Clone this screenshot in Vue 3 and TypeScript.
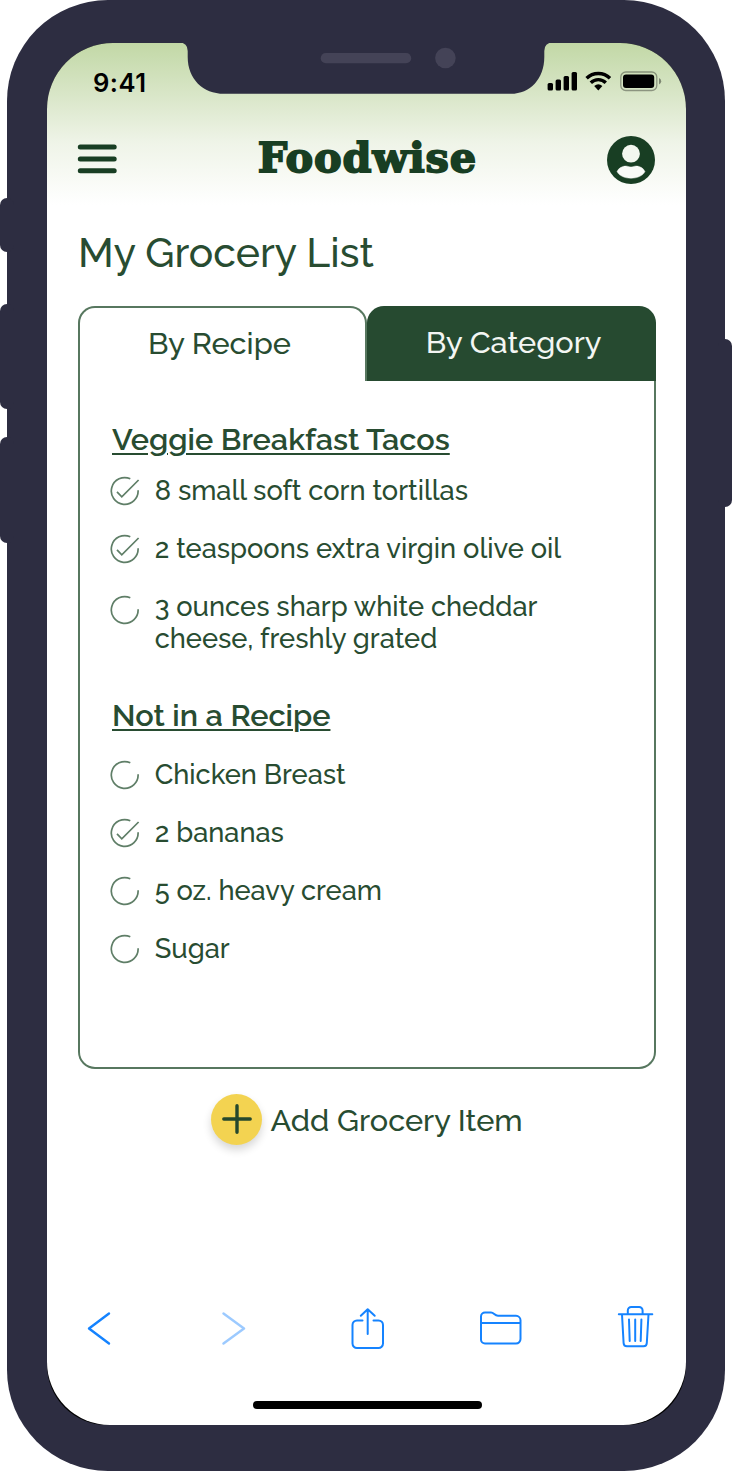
<script setup lang="ts">
import { ref } from 'vue'

interface GroceryItem {
  qty?: string
  lines: string[]
  done: boolean
}
interface GroceryGroup {
  title: string
  kind: string
  items: GroceryItem[]
}

const groups = ref<GroceryGroup[]>([
  {
    title: 'Veggie Breakfast Tacos',
    kind: 'recipe',
    items: [
      { qty: '8', lines: ['small soft corn tortillas'], done: true },
      { qty: '2', lines: ['teaspoons extra virgin olive oil'], done: true },
      { qty: '3', lines: ['ounces sharp white cheddar', 'cheese, freshly grated'], done: false },
    ],
  },
  {
    title: 'Not in a Recipe',
    kind: 'loose',
    items: [
      { lines: ['Chicken Breast'], done: false },
      { qty: '2', lines: ['bananas'], done: true },
      { qty: '5', lines: ['oz. heavy cream'], done: false },
      { lines: ['Sugar'], done: false },
    ],
  },
])
</script>

<template>
  <div class="device">
    <i class="key key-mute"></i>
    <i class="key key-up"></i>
    <i class="key key-down"></i>
    <i class="key key-power"></i>
    <div class="well">
      <div class="screen">
        <div class="status">
          <span class="time">9:41</span>
          <svg class="signals" width="116" height="24" viewBox="546 69 116 24">
            <rect x="547.6" y="83" width="5.4" height="7.5" rx="1.5" />
            <rect x="555.6" y="79.6" width="5.4" height="10.9" rx="1.5" />
            <rect x="563.6" y="76" width="5.4" height="14.5" rx="1.5" />
            <rect x="571.6" y="72" width="5.4" height="18.5" rx="1.5" />
            <g fill="none" stroke="#000" stroke-width="3.4">
              <path d="M586.6 78.3 A16.5 16.5 0 0 1 610 78.3" />
              <path d="M590.8 82.7 A10.8 10.8 0 0 1 605.8 82.7" />
            </g>
            <path d="M594.2 86 Q598.3 82.6 602.4 86 L598.3 90.4 Z" />
            <rect x="620.8" y="72" width="36" height="18.5" rx="5" fill="none" stroke="#000" stroke-opacity=".35" stroke-width="1.3" />
            <rect x="623" y="74.6" width="31.2" height="13.4" rx="3" />
            <path d="M659 78 Q661.2 78.8 661.2 81.3 Q661.2 83.8 659 84.6 Z" fill-opacity=".4" />
          </svg>
        </div>

        <header class="appbar">
          <svg class="menu" width="40" height="32" viewBox="0 0 40 32" stroke="#183e23" stroke-width="5" stroke-linecap="round">
            <path d="M3.3 4H37.200M3.3 16H37.200M3.3 27.800H37.200" />
          </svg>
          <span class="brand">Foodwise</span>
          <svg class="avatar" width="48" height="48" viewBox="0 0 48 48">
            <circle cx="24" cy="24" r="24" fill="#183e23" />
            <circle cx="24" cy="17.7" r="8.9" fill="#f3f7ef" />
            <path d="M10 35.600 C11.500 32.200 15 30 18.800 30 C21 30 21.600 31 24 31 C26.400 31 27 30 29.200 30 C33 30 36.500 32.200 38 35.600 C35.800 40 30 42.300 24 42.300 C18 42.300 12.200 40 10 35.600 Z" fill="#f9fbf8" stroke="#f9fbf8" stroke-width=".4" stroke-linejoin="round" />
          </svg>
        </header>

        <main>
          <h1>My Grocery List</h1>
          <div class="tabs">
            <button class="tab current">By Recipe</button>
            <button class="tab other">By Category</button>
          </div>
          <div class="panel">
            <section v-for="group in groups" :key="group.title" :class="group.kind">
              <h2>{{ group.title }}</h2>
              <ul>
                <li v-for="item in group.items" :key="item.lines[0]" :class="{ tall: item.lines.length > 1 }">
                  <svg class="check" width="30" height="30" viewBox="0 0 30 30" fill="none" stroke="#5f7e67" stroke-width="1.7">
                    <path d="M20.3 2.8 A13.4 13.4 0 1 0 28.1 14.2" />
                    <path v-if="item.done" d="M7 15.8 L11.8 20.8 L28.6 4" />
                  </svg>
                  <p>
                    <span v-for="(line, n) in item.lines" :key="line" class="line">{{ n === 0 && item.qty ? item.qty + ' ' : '' }}{{ line }}</span>
                  </p>
                </li>
              </ul>
            </section>
          </div>
          <button class="add">
            <span class="plus">
              <svg width="30" height="30" viewBox="0 0 30 30" stroke="#24482d" stroke-width="3.4" stroke-linecap="round">
                <path d="M1.8 15H28.2M15 1.8V28.2" />
              </svg>
            </span>
            <span class="add-label">Add Grocery Item</span>
          </button>
        </main>

        <nav class="toolbar">
          <svg viewBox="77 1304 44 48"><path d="M109 1313.5 L89 1328.5 L109 1343.5" stroke-width="2.4" /></svg>
          <svg viewBox="211 1304 44 48" class="faint"><path d="M223.500 1313.5 L244 1328.5 L223.500 1343.5" stroke-width="2.4" /></svg>
          <svg viewBox="345 1304 44 48">
            <path d="M362.500 1320.500H357a4.500 4.500 0 0 0-4.500 4.500v18.500a4.500 4.500 0 0 0 4.500 4.500h21.500a4.500 4.500 0 0 0 4.500-4.500V1325a4.500 4.500 0 0 0-4.500-4.500H373.500M367.700 1334V1309.500M360.800 1315.800L367.700 1309.200L374.700 1315.800" />
          </svg>
          <svg viewBox="479 1304 44 48">
            <path d="M481 1340V1316.500a4 4 0 0 1 4-4h6c3 0 3.500 3.300 7 3.300h18a4.500 4.500 0 0 1 4.500 4.500V1339a4.500 4.500 0 0 1-4.500 4.500H485a4 4 0 0 1-4-4M481 1323H520.500" />
          </svg>
          <svg viewBox="613 1304 44 48">
            <path d="M618.800 1314.300H652.300M627.800 1314V1310.500a3.500 3.500 0 0 1 3.500-3.500h7.800a3.500 3.500 0 0 1 3.500 3.500V1314M622 1314.500L623.600 1343a3.300 3.300 0 0 0 3.300 3.200h16.600a3.300 3.300 0 0 0 3.300-3.200L648.500 1314.500M629 1319.500L629.700 1341M635.200 1319.500V1341M641.400 1319.500L640.700 1341" />
          </svg>
        </nav>
        <div class="home"></div>
      </div>
    </div>
    <svg class="notch" width="378" height="54" viewBox="177 42 378 54">
      <path d="M177 41 V42.500 H179 Q187.700 42.500 187.700 51 V57 C187.700 79 203 93.800 224 93.800 H511 C530 93.800 544.300 79 544.300 57 V51 Q544.300 42.500 553 42.500 H555 V41 Z" fill="#2d2d41" />
      <rect x="320.700" y="53" width="90.500" height="10.300" rx="5.100" fill="#444357" />
      <circle cx="445.400" cy="58" r="10.300" fill="#444357" />
    </svg>
  </div>
</template>

<style>
body {
  margin: 0;
  background: #fff;
}
</style>

<style scoped>
* {
  box-sizing: border-box;
}
.device {
  position: relative;
  width: 718px;
  height: 1470.5px;
  margin-left: 7px;
  padding: 42.5px 39.5px 45.5px 40px;
  border-radius: 101px;
  background: #2d2d41;
  font-family: Raleway, Lato, 'Noto Sans', sans-serif;
  font-weight: 500;
  color: #284c31;
}
.key {
  position: absolute;
  left: -7px;
  width: 14px;
  border-radius: 7px;
  background: #2d2d41;
}
.key-mute { top: 198px; height: 54px; }
.key-up { top: 304px; height: 105px; }
.key-down { top: 437px; height: 106px; }
.key-power { left: auto; right: -7px; top: 339px; height: 168px; }
.well {
  height: 1382px;
  border-radius: 66px 66px 60px 60px;
  background: #000;
}
.screen {
  display: flex;
  flex-direction: column;
  height: 100%;
  overflow: hidden;
  border-radius: 66px 66px 63px 63px;
  background: linear-gradient(#c2d8a6 0, #d9e6c8 52px, #eff4e8 100px, #fff 162px);
}
.notch {
  position: absolute;
  left: 170px;
  top: 42px;
}
.status {
  display: flex;
  justify-content: space-between;
  height: 64.5px;
  padding: 26.500px 24px 0 46px;
}
.time {
  font: 600 25.6px/28px Inter, sans-serif;
  letter-spacing: 0.5px;
  color: #000;
  height: 28px;
}
.appbar {
  display: flex;
  align-items: center;
  justify-content: space-between;
  height: 105px;
  padding: 0 30px;
}
.brand {
  margin: -4px -10px 0 0;
  font: 700 41.5px/50px 'DejaVu Serif', serif;
  letter-spacing: 0.8px;
  -webkit-text-stroke: 1.8px #183e23;
  color: #183e23;
}
.menu {
  margin-top: -1px;
}
main {
  display: flex;
  flex-direction: column;
  padding: 0 30px 0 31px;
}
h1 {
  margin: 0;
  height: 94px;
  font-size: 40.9px;
  font-weight: 500;
  line-height: 82px;
}
.tabs {
  display: flex;
  height: 75px;
}
button {
  font: inherit;
  color: inherit;
  background: none;
  border: 0;
  padding: 0;
}
.tab {
  width: 289px;
  font-size: 30.67px;
  line-height: 36px;
  border-radius: 17px 17px 0 0;
}
.tab.current {
  padding: 0 6px 4px 0;
  border: 2px solid #57775f;
  border-bottom: 0;
}
.tab.other {
  padding: 0 0 3px 5px;
  background: #264a30;
  color: #f3f6f3;
}
.panel {
  height: 688px;
  padding: 40px 31px 0;
  border: 2px solid #57775f;
  border-top: 0;
  border-radius: 0 0 17px 17px;
}
h2 {
  margin: 0;
  height: 36px;
  font-size: 30.67px;
  font-weight: 600;
  line-height: 36px;
  text-decoration: underline;
  text-decoration-thickness: 2px;
  text-underline-offset: 3px;
  padding-left: 1px;
}
ul {
  margin: 0;
  padding: 0;
  list-style: none;
}
li {
  display: flex;
  height: 58px;
  padding-top: 13px;
}
.recipe ul { padding-top: 6px; }
.loose ul { padding-top: 14px; }
.recipe li.tall { height: 118px; }
.check {
  flex: none;
  margin-left: -1px;
}
.tall .check { margin-top: 3px; }
p {
  margin: -2px 0 0 14.7px;
  font-size: 27.26px;
  line-height: 32px;
}
.line {
  display: block;
  white-space: nowrap;
}
.add {
  display: flex;
  align-items: center;
  height: 52px;
  margin: 24px 0 0 133px;
  font-size: 30.67px;
}
.add-label {
  padding-top: 2px;
}
.plus {
  display: grid;
  place-items: center;
  width: 51px;
  height: 51px;
  margin-right: 8.5px;
  border-radius: 50%;
  background: #f3d351;
  box-shadow: 0 5px 9px rgba(0, 0, 0, 0.16);
}
.toolbar {
  display: flex;
  justify-content: space-between;
  margin-top: auto;
  padding: 0 29px 0 30px;
}
.toolbar svg {
  width: 44px;
  height: 48px;
  fill: none;
  stroke: #1583ff;
  stroke-width: 2;
  stroke-linecap: round;
  stroke-linejoin: round;
}
.toolbar .faint { opacity: 0.42; }
.home {
  width: 229px;
  height: 8.5px;
  margin: 49px 0 15.500px 206px;
  border-radius: 5px;
  background: #000;
}
</style>
